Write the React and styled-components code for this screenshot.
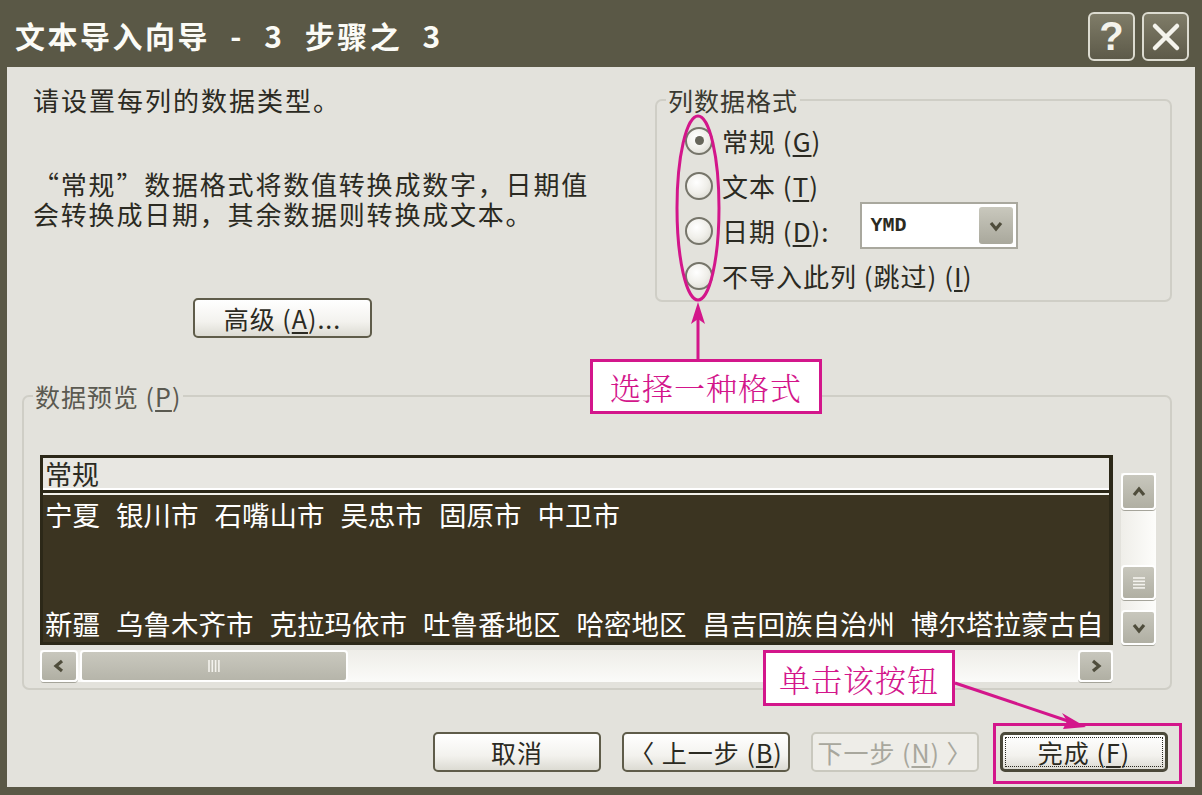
import React from 'react';
import styled, { createGlobalStyle } from 'styled-components';

const GlobalStyle = createGlobalStyle`
  html, body {
    margin: 0;
    padding: 0;
    background: #5a5846;
  }
  body {
    font-family: "Noto Sans CJK SC", "Noto Sans", sans-serif;
    color: #2b2a22;
  }
`;

const MAGENTA = '#d3168b';

const ROW_1 = ['宁夏', '银川市', '石嘴山市', '吴忠市', '固原市', '中卫市'];
const ROW_4 = ['新疆', '乌鲁木齐市', '克拉玛依市', '吐鲁番地区', '哈密地区', '昌吉回族自治州', '博尔塔拉蒙古自'];

function Chevron({ dir = 'down', size = 16 }) {
  const pts = {
    up: '3,11 8,5 13,11',
    down: '3,5 8,11 13,5',
    left: '11,3 5,8 11,13',
    right: '5,3 11,8 5,13',
  }[dir];
  return (
    <svg width={size} height={size} viewBox="0 0 16 16">
      <polyline points={pts} fill="none" stroke="#4f4d3c" strokeWidth="3.2" />
    </svg>
  );
}

function Grip({ vertical }) {
  const lines = [0, 1, 2, 3];
  return vertical ? (
    <svg width="16" height="14" viewBox="0 0 16 14">
      {lines.map((i) => (
        <line key={i} x1="2" x2="14" y1={2 + i * 3.3} y2={2 + i * 3.3} stroke="#f4f3ee" strokeWidth="1.6" />
      ))}
    </svg>
  ) : (
    <svg width="14" height="16" viewBox="0 0 14 16">
      {lines.map((i) => (
        <line key={i} y1="2" y2="14" x1={2 + i * 3.3} x2={2 + i * 3.3} stroke="#f4f3ee" strokeWidth="1.6" />
      ))}
    </svg>
  );
}

function App() {
  return (
    <Window>
      <GlobalStyle />
      <TitleBar>
        <Title>文本导入向导 - 3 步骤之 3</Title>
        <CaptionButtons>
          <CaptionButton>?</CaptionButton>
          <CaptionButton>
            <svg width="30" height="30" viewBox="0 0 30 30">
              <path d="M4 4 L26 26 M26 4 L4 26" stroke="#f4f3ec" strokeWidth="4.5" strokeLinecap="round" />
            </svg>
          </CaptionButton>
        </CaptionButtons>
      </TitleBar>

      <Body>
        <TopSection>
          <LeftCol>
            <Line>请设置每列的数据类型。</Line>
            <Para>
              <div>“常规”数据格式将数值转换成数字，日期值</div>
              <div>会转换成日期，其余数据则转换成文本。</div>
            </Para>
            <Button $width={179} $ml={160}>
              高级 (<u>A</u>)...
            </Button>
          </LeftCol>

          <FormatGroup>
            <Legend $offset={-19}>列数据格式</Legend>
            <RadioRow>
              <Radio $checked />
              <RadioLabel>
                常规 (<u>G</u>)
              </RadioLabel>
            </RadioRow>
            <RadioRow>
              <Radio />
              <RadioLabel>
                文本 (<u>T</u>)
              </RadioLabel>
            </RadioRow>
            <RadioRow>
              <Radio />
              <RadioLabel>
                日期 (<u>D</u>):
              </RadioLabel>
              <Select>
                <SelectValue>YMD</SelectValue>
                <SelectArrow>
                  <Chevron dir="down" />
                </SelectArrow>
              </Select>
            </RadioRow>
            <RadioRow>
              <Radio />
              <RadioLabel>
                不导入此列 (跳过) (<u>I</u>)
              </RadioLabel>
            </RadioRow>
          </FormatGroup>
        </TopSection>

        <PreviewGroup>
          <Legend $offset={-7} $muted>
            数据预览 (<u>P</u>)
          </Legend>
          <PreviewArea>
            <TableCol>
              <Table>
                <TableHeader>常规</TableHeader>
                <TableData>
                  <DataRow>
                    {ROW_1.map((w) => (
                      <span key={w}>{w}</span>
                    ))}
                  </DataRow>
                  <DataRow />
                  <DataRow />
                  <DataRow $last>
                    {ROW_4.map((w) => (
                      <span key={w}>{w}</span>
                    ))}
                  </DataRow>
                </TableData>
              </Table>
              <HScroll>
                <ScrollButton $w={38}>
                  <Chevron dir="left" />
                </ScrollButton>
                <HThumb>
                  <Grip />
                </HThumb>
                <HTrack />
                <ScrollButton $w={35}>
                  <Chevron dir="right" />
                </ScrollButton>
              </HScroll>
            </TableCol>
            <VScroll>
              <ScrollButton $h={37}>
                <Chevron dir="up" />
              </ScrollButton>
              <VTrack />
              <ScrollButton $h={35}>
                <Grip vertical />
              </ScrollButton>
              <VGap />
              <ScrollButton $h={35}>
                <Chevron dir="down" />
              </ScrollButton>
            </VScroll>
          </PreviewArea>
        </PreviewGroup>

        <ButtonRow>
          <Button>取消</Button>
          <Button>
            〈 上一步 (<u>B</u>)
          </Button>
          <Button $disabled>
            下一步 (<u>N</u>) 〉
          </Button>
          <Button $default>
            <FocusRing>
              完成 (<u>F</u>)
            </FocusRing>
          </Button>
        </ButtonRow>
      </Body>

      <Annotations width="1202" height="795" viewBox="0 0 1202 795">
        <ellipse cx="698" cy="208" rx="21" ry="92" fill="none" stroke={MAGENTA} strokeWidth="3" />
        <line x1="698" y1="359" x2="698" y2="318" stroke={MAGENTA} strokeWidth="3" />
        <polygon points="698,302 691,324 698,319 705,324" fill={MAGENTA} />
        <line x1="955" y1="683" x2="1068" y2="721" stroke={MAGENTA} strokeWidth="3" />
        <polygon points="1086,727 1063,729 1067,721 1062,713" fill={MAGENTA} />
      </Annotations>
      <Callout $x={590} $y={359} $w={232} $h={55}>
        选择一种格式
      </Callout>
      <Callout $x={763} $y={650} $w={192} $h={56}>
        单击该按钮
      </Callout>
      <Highlight />
    </Window>
  );
}

export default App;

const Window = styled.div`
  position: relative;
  width: 1202px;
  height: 795px;
  display: flex;
  flex-direction: column;
  background: #5a5846;
  overflow: hidden;
`;

const TitleBar = styled.div`
  height: 67px;
  flex-shrink: 0;
  display: flex;
  align-items: flex-start;
  justify-content: space-between;
  padding: 0 13px 0 15px;
  box-sizing: border-box;
`;

const Title = styled.div`
  margin-top: 15px;
  color: #fbfbf6;
  font-size: 30px;
  font-weight: 700;
  line-height: 40px;
  letter-spacing: 2.5px;
  word-spacing: 11px;
  white-space: pre;
`;

const CaptionButtons = styled.div`
  display: flex;
  gap: 7px;
  margin-top: 12px;
`;

const CaptionButton = styled.div`
  width: 47px;
  height: 49px;
  box-sizing: border-box;
  border: 2px solid #dcdbd0;
  border-radius: 6px;
  background: linear-gradient(180deg, #7f7c68 0%, #5d5a49 100%);
  display: flex;
  align-items: center;
  justify-content: center;
  color: #f4f3ec;
  font-family: "Liberation Sans", sans-serif;
  font-size: 40px;
  font-weight: 700;
`;

const Body = styled.div`
  flex: 1;
  margin: 0 7px 8px 7px;
  padding: 18px 23px 0 15px;
  background: #e3e2dc;
  display: flex;
  flex-direction: column;
`;

const TopSection = styled.div`
  display: flex;
  justify-content: space-between;
  align-items: flex-start;
  height: 252px;
`;

const LeftCol = styled.div`
  display: flex;
  flex-direction: column;
  align-items: flex-start;
  padding-left: 11px;
`;

const Line = styled.div`
  font-size: 26px;
  line-height: 30px;
  letter-spacing: 2px;
`;

const Para = styled.div`
  margin-top: 54px;
  font-size: 26px;
  line-height: 30px;
  letter-spacing: 1.8px;
`;

const Button = styled.div`
  width: ${(p) => p.$width || 168}px;
  height: 40px;
  margin-left: ${(p) => p.$ml || 0}px;
  margin-top: ${(p) => (p.$ml ? 69 : 0)}px;
  box-sizing: border-box;
  display: flex;
  align-items: center;
  justify-content: center;
  border: ${(p) => (p.$default ? '3px solid #4b493a' : '2px solid #5f5c4a')};
  border-color: ${(p) => (p.$disabled ? '#c9c8be' : undefined)};
  border-radius: 5px;
  background: ${(p) =>
    p.$disabled ? '#eeede8' : 'linear-gradient(180deg, #ffffff 0%, #f3f2ee 60%, #dcdbd3 100%)'};
  color: ${(p) => (p.$disabled ? '#a8a79d' : '#2b2a22')};
  font-size: 25px;
  letter-spacing: 1px;
  white-space: pre;

  u {
    text-underline-offset: 3px;
  }
`;

const FocusRing = styled.span`
  display: flex;
  align-items: center;
  justify-content: center;
  width: calc(100% - 6px);
  height: calc(100% - 6px);
  border: 1px dotted #2b2a22;
`;

const FormatGroup = styled.fieldset`
  width: 517px;
  box-sizing: border-box;
  margin: 0;
  padding: 3px 10px 2px 28px;
  border: 2px solid #cfcec6;
  border-radius: 7px;
`;

const Legend = styled.legend`
  margin-left: ${(p) => p.$offset}px;
  padding: 0 2px;
  font-size: 25px;
  line-height: 30px;
  letter-spacing: 1px;
  color: ${(p) => (p.$muted ? '#5a5950' : '#3a3930')};

  u {
    text-underline-offset: 3px;
  }
`;

const RadioRow = styled.div`
  height: 45px;
  display: flex;
  align-items: center;
`;

const Radio = styled.span`
  position: relative;
  width: 28px;
  height: 28px;
  flex-shrink: 0;
  box-sizing: border-box;
  border: 2px solid #76756a;
  border-radius: 50%;
  background: radial-gradient(circle at 40% 35%, #ffffff 0%, #f0efea 50%, #d6d5cc 100%);

  &::after {
    content: '';
    display: ${(p) => (p.$checked ? 'block' : 'none')};
    position: absolute;
    left: 50%;
    top: 50%;
    width: 9px;
    height: 9px;
    margin: -4.5px 0 0 -4.5px;
    border-radius: 50%;
    background: #66655a;
  }
`;

const RadioLabel = styled.span`
  margin-left: 9px;
  font-size: 26px;
  letter-spacing: 1px;
  white-space: pre;

  u {
    text-underline-offset: 3px;
  }
`;

const Select = styled.div`
  margin-left: 30px;
  margin-bottom: 10px;
  width: 158px;
  height: 47px;
  box-sizing: border-box;
  border: 2px solid #a9a89e;
  background: #ffffff;
  display: flex;
  align-items: center;
  justify-content: space-between;
  padding: 3px;
`;

const SelectValue = styled.span`
  padding-left: 6px;
  font-family: "Liberation Mono", monospace;
  font-size: 20px;
  font-weight: 700;
  color: #2b2a22;
`;

const SelectArrow = styled.span`
  width: 34px;
  height: 37px;
  display: flex;
  align-items: center;
  justify-content: center;
  border-radius: 3px;
  background: linear-gradient(180deg, #c9c8bd 0%, #a9a89c 100%);
`;

const PreviewGroup = styled.fieldset`
  margin: 44px 0 0 0;
  padding: 44px 14px 6px 16px;
  border: 2px solid #cfcec6;
  border-radius: 7px;
`;

const PreviewArea = styled.div`
  display: flex;
  gap: 8px;
`;

const TableCol = styled.div`
  width: 1073px;
  display: flex;
  flex-direction: column;
  gap: 5px;
`;

const Table = styled.div`
  height: 190px;
  box-sizing: border-box;
  border: 3px solid #2c2818;
  border-right-width: 4px;
  display: flex;
  flex-direction: column;
`;

const TableHeader = styled.div`
  height: 35px;
  flex-shrink: 0;
  box-sizing: border-box;
  padding-left: 2px;
  background: #e8e7e2;
  border-bottom: 3px solid #2c2818;
  font-size: 27px;
  line-height: 32px;
  color: #2b2a22;
  box-shadow: inset 0 -2px 0 #ffffff;
`;

const TableData = styled.div`
  flex: 1;
  background: #3b3421;
  border-top: 2px solid #f2f1ea;
  padding-left: 2px;
`;

const DataRow = styled.div`
  height: ${(p) => (p.$last ? 34 : 37)}px;
  display: flex;
  gap: 16px;
  align-items: center;
  color: #ffffff;
  font-size: 27.5px;
  line-height: 30px;
  white-space: nowrap;
`;

const ScrollButton = styled.div`
  width: ${(p) => p.$w || 35}px;
  height: ${(p) => p.$h || 32}px;
  flex-shrink: 0;
  box-sizing: border-box;
  display: flex;
  align-items: center;
  justify-content: center;
  border: 2px solid #ffffff;
  border-radius: 4px;
  background: linear-gradient(180deg, #c8c7bd 0%, #b0afa3 100%);
  box-shadow: 0 1px 0 #a5a49a;
`;

const HScroll = styled.div`
  height: 32px;
  display: flex;
  background: linear-gradient(180deg, #eeede8 0%, #fbfbf9 100%);
`;

const HThumb = styled.div`
  width: 268px;
  margin-left: 2px;
  box-sizing: border-box;
  display: flex;
  align-items: center;
  justify-content: center;
  border: 2px solid #ffffff;
  border-radius: 4px;
  background: linear-gradient(180deg, #c9c8be 0%, #b6b5aa 100%);
`;

const HTrack = styled.div`
  flex: 1;
`;

const VScroll = styled.div`
  width: 35px;
  margin-top: 18px;
  height: 172px;
  display: flex;
  flex-direction: column;
  background: linear-gradient(90deg, #efeee9 0%, #fdfdfb 100%);
`;

const VTrack = styled.div`
  flex: 1;
`;

const VGap = styled.div`
  height: 10px;
`;

const ButtonRow = styled.div`
  display: flex;
  justify-content: flex-end;
  gap: 21px;
  margin-top: 42px;
  padding-right: 4px;
`;

const Annotations = styled.svg`
  position: absolute;
  left: 0;
  top: 0;
  pointer-events: none;
`;

const Callout = styled.div`
  position: absolute;
  left: ${(p) => p.$x}px;
  top: ${(p) => p.$y}px;
  width: ${(p) => p.$w}px;
  height: ${(p) => p.$h}px;
  box-sizing: border-box;
  border: 3px solid ${MAGENTA};
  background: #ffffff;
  display: flex;
  align-items: center;
  justify-content: center;
  color: ${MAGENTA};
  font-family: "Noto Serif CJK SC", "Noto Sans CJK SC", serif;
  font-size: 31px;
  font-weight: 300;
  letter-spacing: 1px;
`;

const Highlight = styled.div`
  position: absolute;
  left: 993px;
  top: 723px;
  width: 189px;
  height: 61px;
  box-sizing: border-box;
  border: 3px solid ${MAGENTA};
`;
